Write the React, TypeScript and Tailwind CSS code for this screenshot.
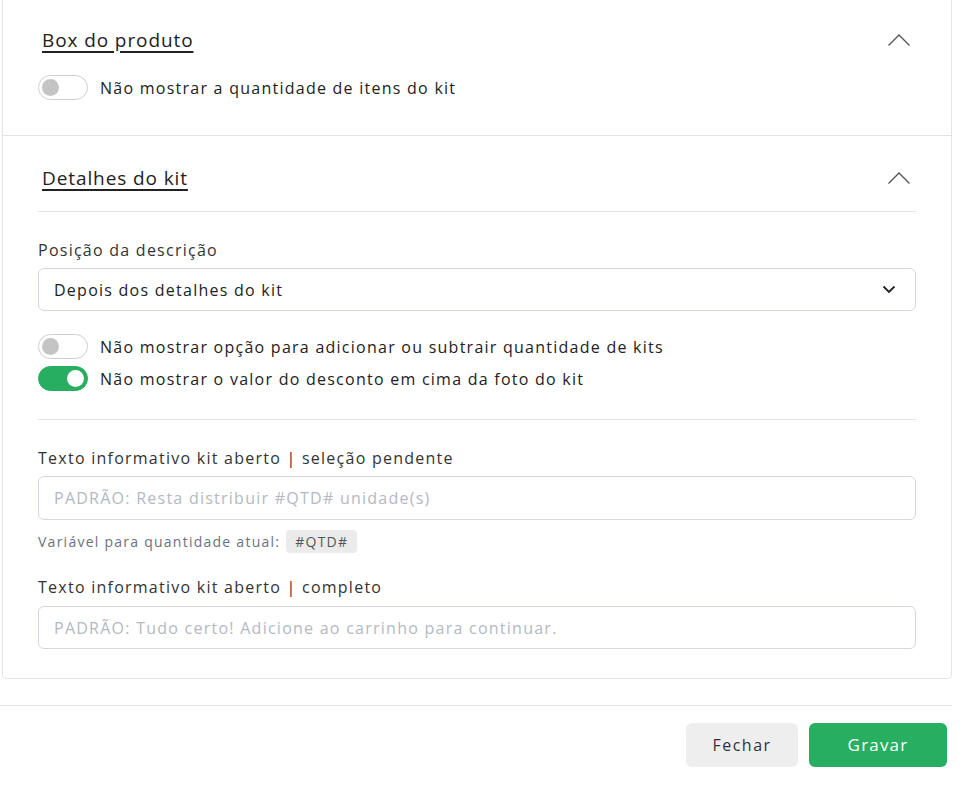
import { useState } from 'react'

function Toggle({ on, onChange }: { on: boolean; onChange: () => void }) {
  return (
    <button
      type="button"
      onClick={onChange}
      className={
        on
          ? 'relative w-[50px] h-[25px] shrink-0 rounded-full bg-[#28ae60] border border-[#28ae60]'
          : 'relative w-[50px] h-[25px] shrink-0 rounded-full bg-white border border-[#cfcfcf]'
      }
    >
      <span
        className={
          on
            ? 'absolute top-[3px] left-[28px] w-[17px] h-[17px] rounded-full bg-white'
            : 'absolute top-[3px] left-[3px] w-[17px] h-[17px] rounded-full bg-[#c4c4c4]'
        }
      />
    </button>
  )
}

function ChevronUp() {
  return (
    <svg width="24" height="14" viewBox="0 0 24 14" fill="none" className="text-[#555]">
      <polyline points="1.5,12.5 12,2 22.5,12.5" stroke="currentColor" strokeWidth="1.4" />
    </svg>
  )
}

function SectionHeader({ title }: { title: string }) {
  return (
    <div className="flex items-center justify-between h-[26px]">
      <span className="ml-1 text-[19px] leading-[26px] tracking-[0.9px] text-[#222] underline underline-offset-[4px] decoration-[1.5px]">
        {title}
      </span>
      <span className="mr-[5px]">
        <ChevronUp />
      </span>
    </div>
  )
}

export default function App() {
  const [hideQty, setHideQty] = useState(false)
  const [hideAddSub, setHideAddSub] = useState(false)
  const [hideDiscount, setHideDiscount] = useState(true)

  return (
    <div
      className="w-[952px] bg-white text-[#222] tracking-[1.25px]"
      style={{ fontFamily: '"Open Sans", "Liberation Sans", sans-serif' }}
    >
      {/* Card */}
      <div className="ml-[2px] border-x border-b border-[#e3e3e3] rounded-b-[5px]">
        {/* Box do produto */}
        <div className="px-[35px] pt-[27px] pb-[35px] border-b border-[#e3e3e3]">
          <SectionHeader title="Box do produto" />
          <div className="mt-[22px] flex items-center gap-3">
            <Toggle on={hideQty} onChange={() => setHideQty(!hideQty)} />
            <span className="text-[16px] leading-6">Não mostrar a quantidade de itens do kit</span>
          </div>
        </div>

        {/* Detalhes do kit */}
        <div className="px-[35px] pt-[29px] pb-[29px]">
          <SectionHeader title="Detalhes do kit" />
          <div className="mt-5 border-t border-[#e5e5e5]" />

          <div className="mt-[26px] text-[16px] leading-6 text-[#333]">Posição da descrição</div>
          <div className="mt-[6px] h-[43px] flex items-center justify-between px-[15px] border border-[#d4d8de] rounded-[6px]">
            <span className="text-[16px] text-[#222]">Depois dos detalhes do kit</span>
            <svg width="14" height="9" viewBox="0 0 14 9" fill="none" className="mr-[4px]">
              <polyline points="1.5,1.5 7,7 12.5,1.5" stroke="#222" strokeWidth="1.8" />
            </svg>
          </div>

          <div className="mt-[23px] flex items-center gap-3">
            <Toggle on={hideAddSub} onChange={() => setHideAddSub(!hideAddSub)} />
            <span className="text-[16px] leading-6">Não mostrar opção para adicionar ou subtrair quantidade de kits</span>
          </div>
          <div className="mt-[7px] flex items-center gap-3">
            <Toggle on={hideDiscount} onChange={() => setHideDiscount(!hideDiscount)} />
            <span className="text-[16px] leading-6">Não mostrar o valor do desconto em cima da foto do kit</span>
          </div>

          <div className="mt-[28px] border-t border-[#e5e5e5]" />

          <div className="mt-[26px] text-[16px] leading-6 text-[#333]">Texto informativo kit aberto | seleção pendente</div>
          <input
            className="mt-[6px] w-full h-[44px] px-[15px] border border-[#d4d8de] rounded-[6px] text-[16px] tracking-[1.25px] outline-none placeholder:text-[#b3b9c2]"
            placeholder="PADRÃO: Resta distribuir #QTD# unidade(s)"
          />
          <div className="mt-[10px] h-[23px] flex items-center gap-[6px] text-[14px] tracking-[1.25px] text-[#6b7280]">
            <span>Variável para quantidade atual:</span>
            <span className="h-[23px] px-[9px] flex items-center rounded-[4px] bg-[#ebebeb] text-[#555]">#QTD#</span>
          </div>

          <div className="mt-[22px] text-[16px] leading-6 text-[#333]">Texto informativo kit aberto | completo</div>
          <input
            className="mt-[7px] w-full h-[43px] px-[15px] border border-[#d4d8de] rounded-[6px] text-[16px] tracking-[1.25px] outline-none placeholder:text-[#b3b9c2]"
            placeholder="PADRÃO: Tudo certo! Adicione ao carrinho para continuar."
          />
        </div>
      </div>

      {/* Footer */}
      <div className="mt-[26px] border-t border-[#e5e5e5]" />
      <div className="mt-[17px] pr-[5px] flex justify-end gap-[11px]">
        <button className="w-[112px] h-[44px] rounded-[6px] bg-[#eeeeee] text-[16px] tracking-[1.5px] text-[#333]">Fechar</button>
        <button className="w-[138px] h-[44px] rounded-[6px] bg-[#28ae60] text-[17px] tracking-[1.2px] text-white">Gravar</button>
      </div>
    </div>
  )
}
